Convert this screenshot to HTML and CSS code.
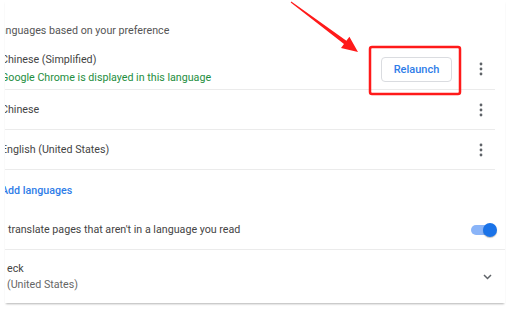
FILE: index.html
```html
<!DOCTYPE html>
<html lang="en">
<head>
    <meta charset="UTF-8">
    <title>Languages</title>
    <link rel="stylesheet" href="styles.css">
</head>
<body>
<div class="card">
    <div class="heading"><span>Languages based on your preference</span></div>
    <div class="lang-list">
        <div class="lang-row first">
            <div class="lang-text">
                <div>Chinese (Simplified)</div>
                <div class="note">Google Chrome is displayed in this language</div>
            </div>
            <button class="relaunch">Relaunch</button>
            <span class="kebab"><svg width="4" height="14" viewBox="0 0 4 14"><circle cx="2" cy="2" r="1.4"/><circle cx="2" cy="7" r="1.4"/><circle cx="2" cy="12" r="1.4"/></svg></span>
        </div>
        <div class="lang-row">
            <div class="lang-text">Chinese</div>
            <span class="kebab"><svg width="4" height="14" viewBox="0 0 4 14"><circle cx="2" cy="2" r="1.4"/><circle cx="2" cy="7" r="1.4"/><circle cx="2" cy="12" r="1.4"/></svg></span>
        </div>
        <div class="lang-row">
            <div class="lang-text">English (United States)</div>
            <span class="kebab"><svg width="4" height="14" viewBox="0 0 4 14"><circle cx="2" cy="2" r="1.4"/><circle cx="2" cy="7" r="1.4"/><circle cx="2" cy="12" r="1.4"/></svg></span>
        </div>
    </div>
    <div class="add-row"><span>Add languages</span></div>
    <div class="toggle-row">
        <span class="toggle-label">translate pages that aren't in a language you read</span>
        <span class="toggle"><span class="knob"></span></span>
    </div>
    <div class="spell-row">
        <div class="spell-text">
            <div>eck</div>
            <div class="sub">(United States)</div>
        </div>
        <svg class="chevron" width="9" height="6" viewBox="0 0 9 6"><path d="M1 1l3.5 3.5L8 1" fill="none" stroke="#5f6368" stroke-width="1.5"/></svg>
    </div>
</div>

<!-- annotation drawn over the screenshot -->
<svg class="marks" width="507" height="319" viewBox="0 0 507 319">
    <polygon points="290.7,2.4 344,44 341,48 358,52 349.4,36.8 346.4,40.8 291.3,1.6" fill="#ff1a1a"/>
    <rect x="370" y="47" width="90" height="47" rx="2" fill="none" stroke="#ff1a1a" stroke-width="2.5"/>
</svg>
</body>
</html>
```

FILE: styles.css
```css
body {
    margin: 0;
    width: 507px;
    height: 319px;
    overflow: hidden;
    position: relative;
    background: #fff;
    font-family: Roboto, "Liberation Sans", sans-serif;
    font-size: 10.7px;
    color: #444;
}

.card {
    margin-left: 5px;
    width: 500px;
    overflow: hidden;
    background: #fff;
    box-shadow: 0 2px 2px -1px rgba(0, 0, 0, 0.3);
}

.heading {
    height: 45px;
    box-sizing: border-box;
    padding-top: 15px;
    display: flex;
    align-items: center;
}

.heading span {
    margin-left: -11px;
    color: #555;
}

.lang-list {
    margin-right: 10px;
}

.lang-row {
    height: 40px;
    box-sizing: border-box;
    border-bottom: 1px solid #ebebeb;
    display: flex;
    align-items: center;
}

.lang-row.first {
    height: 45px;
    padding-top: 4px;
}

.lang-text {
    flex: 1;
    margin-left: -4px;
    line-height: 18px;
}

.note {
    color: #1e8e3e;
}

.relaunch {
    width: 71px;
    height: 25px;
    margin-right: 27px;
    padding: 0;
    border: 1px solid #dadce0;
    border-radius: 4px;
    background: #fff;
    font-family: inherit;
    font-size: 11px;
    font-weight: 500;
    color: #2f7de8;
}

.kebab {
    display: flex;
    margin-right: 12px;
}

.kebab svg {
    fill: #5f6368;
}

.add-row {
    height: 40px;
    display: flex;
    align-items: center;
}

.add-row span {
    margin-left: -4px;
    font-weight: 500;
    color: #2f7de8;
}

.toggle-row {
    height: 40px;
    box-sizing: border-box;
    border-bottom: 1px solid #ebebeb;
    display: flex;
    align-items: center;
}

.toggle-label {
    flex: 1;
    padding-left: 3px;
}

.toggle {
    position: relative;
    width: 22px;
    height: 10px;
    margin-right: 12px;
    border-radius: 5px;
    background: #8ab4f8;
}

.knob {
    position: absolute;
    right: -4px;
    top: -2px;
    width: 14px;
    height: 14px;
    border-radius: 50%;
    background: #1a73e8;
    box-shadow: 0 1px 1px rgba(0, 0, 0, 0.25);
}

.spell-row {
    height: 53px;
    display: flex;
    align-items: center;
}

.spell-text {
    flex: 1;
    padding-left: 2px;
    line-height: 16px;
}

.sub {
    color: #666;
}

.chevron {
    margin-right: 13px;
}

.marks {
    position: absolute;
    left: 0;
    top: 0;
    pointer-events: none;
}
```
